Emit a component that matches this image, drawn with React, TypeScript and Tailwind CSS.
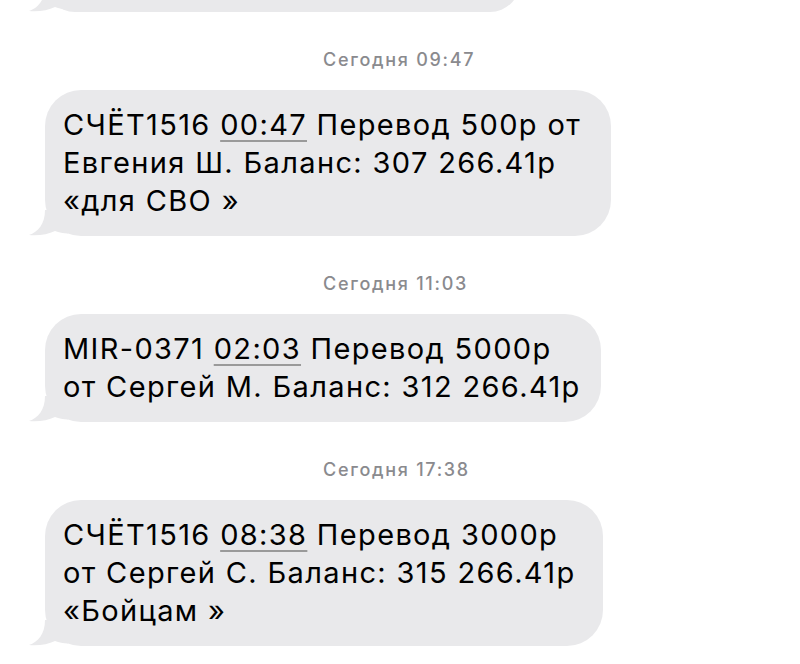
import React from 'react'

type Part = string | { time: string }

const messages: { stamp: string; gap: string; width: string; lines: Part[][] }[] = [
  {
    stamp: 'Сегодня 09:47',
    gap: 'mt-[37px]',
    width: 'w-[566px]',
    lines: [
      ['СЧЁТ1516 ', { time: '00:47' }, ' Перевод 500р от'],
      ['Евгения Ш. Баланс: 307 266.41р'],
      ['«для СВО »'],
    ],
  },
  {
    stamp: 'Сегодня 11:03',
    gap: 'mt-[37px]',
    width: 'w-[556px]',
    lines: [
      ['MIR-0371 ', { time: '02:03' }, ' Перевод 5000р'],
      ['от Сергей М. Баланс: 312 266.41р'],
    ],
  },
  {
    stamp: 'Сегодня 17:38',
    gap: 'mt-[37px]',
    width: 'w-[558px]',
    lines: [
      ['СЧЁТ1516 ', { time: '08:38' }, ' Перевод 3000р'],
      ['от Сергей С. Баланс: 315 266.41р'],
      ['«Бойцам »'],
    ],
  },
]

function Tail() {
  return (
    <svg
      className="absolute bottom-0 left-[-17px] h-[26px] w-[40px]"
      viewBox="0 0 40 26"
      aria-hidden
    >
      <path
        d="M17 0 C17 14 10 22 1 25 C10 26 20 24.5 27 21 C31 22.5 35 23.3 40 23.6 L40 0 Z"
        fill="#e9e9eb"
      />
    </svg>
  )
}

function Bubble({ width, lines }: { width: string; lines: Part[][] }) {
  return (
    <div
      className={`relative ml-[45px] ${width} rounded-[36px] bg-[#e9e9eb] pb-[16px] pl-[18px] pt-[16px] text-[29px] leading-[38px] tracking-[1.35px] text-black`}
    >
      {lines.map((line, i) => (
        <div key={i} className="whitespace-pre">
          {line.map((p, j) =>
            typeof p === 'string' ? (
              <span key={j}>{p}</span>
            ) : (
              <span
                key={j}
                className="underline decoration-[#9a9a9a] decoration-[1.5px] underline-offset-[5px]"
              >
                {p.time}
              </span>
            ),
          )}
        </div>
      ))}
      <Tail />
    </div>
  )
}

export default function App() {
  return (
    <div
      className="h-[664px] w-[800px] overflow-hidden bg-white"
      style={{ fontFamily: 'Inter, "Noto Sans", sans-serif' }}
    >
      {/* previous message, mostly scrolled away */}
      <div className="relative ml-[45px] mt-[-48px] h-[60px] w-[475px] rounded-[36px] bg-[#e9e9eb]">
        <Tail />
      </div>

      {messages.map((m) => (
        <div key={m.stamp}>
          <div
            className={`${m.gap} mb-[19px] ml-[323px] text-[18px] font-medium leading-[22px] tracking-[1.7px] text-[#8a8a8e]`}
          >
            {m.stamp}
          </div>
          <Bubble width={m.width} lines={m.lines} />
        </div>
      ))}
    </div>
  )
}
